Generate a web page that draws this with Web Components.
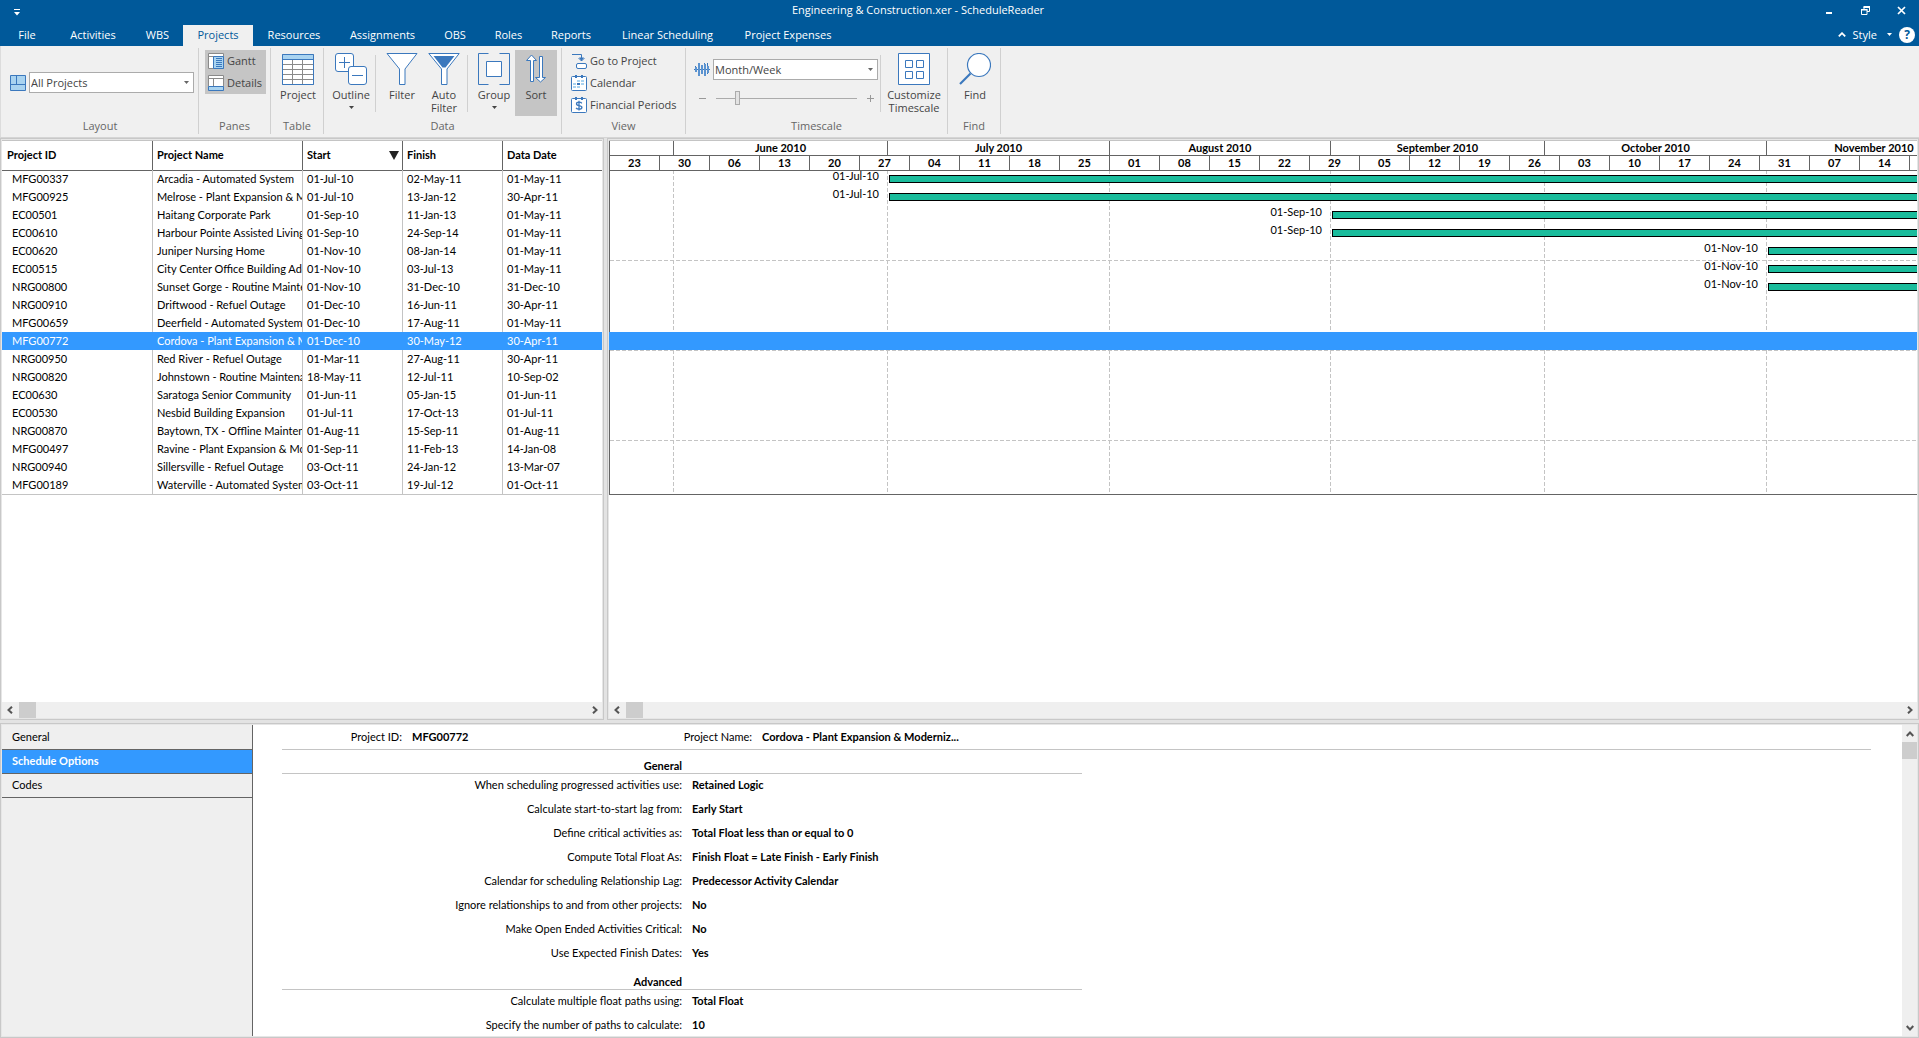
<!DOCTYPE html>
<html lang="en">
<head>
<meta charset="utf-8">
<title>Engineering &amp; Construction.xer - ScheduleReader</title>
<style>
  html, body { height: 100%; margin: 0; }
  body {
    --ui: "Open Sans", "Noto Sans", sans-serif;
    --data: Lato, "Open Sans", sans-serif;
    --blue: #00599a;
    --face: #f0f0f0;
    --rule: #c4c4c4;
    --dark: #646464;
    --select: #3399ff;
    font: 11px/14px var(--ui);
    color: #444;
    background: #e3e3e3;
    overflow: hidden;
  }
</style>
</head>
<body>
<schedule-app></schedule-app>

<script>
const define = (name, css, html, setup) => {
  const t = document.createElement('template');
  t.innerHTML = `<style>
    *, *::before, *::after { box-sizing: border-box; }
    button { font: inherit; color: inherit; background: none; border: 0; padding: 0; margin: 0; cursor: default; }
    svg { display: block; flex: none; }
    ${css}</style>${html}`;
  customElements.define(name, class extends HTMLElement {
    constructor() {
      super();
      this.attachShadow({ mode: 'open' }).append(t.content.cloneNode(true));
    }
    connectedCallback() { if (setup) setup(this, this.shadowRoot); }
  });
};

const S = 'fill="#fff" stroke="#3b78bd"';
const ICONS = {
  layout: [16, 16, `<g fill="#a9d3f0" stroke="#3b78bd"><path d="M.5.5h15v15H.5z"/><path d="M.5 9.500h15M6.500.5v9" fill="none"/></g>`],
  gantt: [16, 16, `<path d="M.5.5h15v15H.5z" fill="#fff" stroke="#8a8a8a"/><path d="M1 3.500h14M5.500 3v12" stroke="#8a8a8a"/><path d="M5.500 3.500h10v12h-10z" fill="#a9d3f0" stroke="#3b78bd"/><path d="M8 5.500h6M8 7.500h6M8 9.500h6M8 11.500h6M8 13.500h6" stroke="#3b78bd"/>`],
  details: [16, 16, `<path d="M.5.5h15v11H.5z" fill="#fff" stroke="#8a8a8a"/><path d="M1 3.500h14M5.500 3v8" stroke="#8a8a8a"/><path d="M.5 11.500h15v4H.5z" fill="#a9d3f0" stroke="#3b78bd"/>`],
  table: [32, 32, `<path d="M.5 1.500h31v30H.5z" fill="#fff" stroke="#8a8a8a"/><path d="M1 6.500h30M1 11.500h30M1 16.500h30M1 21.500h30M1 26.500h30M10.500 6v25M20.500 6v25" stroke="#8a8a8a"/><path d="M.5 1.500h31v5H.5z" fill="#a9d3f0"/><path d="M.5 1.500h31v30H.5zM.5 6.500h31" fill="none" stroke="#3b78bd"/>`],
  outline: [32, 32, `<g ${S}><rect x=".5" y=".5" width="18" height="18" rx="2.500"/><path d="M4 9.500h11M9.500 4v11"/><rect x="13.500" y="13.500" width="18" height="18" rx="2.500"/><path d="M17 22.500h11"/></g>`],
  filter: [32, 32, `<path d="M1 .5h30L19 16v15.500h-5.500V16z" ${S}/>`],
  autofilter: [32, 32, `<path d="M.8.5h30.400L19 16v15.500h-5.500V16z" ${S}/><path d="M5.500 3h21L17.500 14.500h-3z" fill="#3b78bd"/>`],
  group: [32, 32, `<path d="M10.500.5H.5v31h10M21.500.5h10v31h-10" fill="none" stroke="#3b78bd"/><path d="M8.500 8.500h15v15h-15z" ${S}/>`],
  sort: [32, 32, `<g ${S} transform="translate(6 1)"><path d="M4.500 27.500V6.500H.5l5-5.500 5 5.500h-3v21z"/><path d="M13.500 2.500v21h-4l5 4.500 5-4.500h-3v-21z"/></g>`],
  goto: [16, 16, `<path d="M1 1.500h9.500V8M7.500 5l3 3 3-3" fill="none" stroke="#3b78bd"/><path d="M8 4.500h5L10.500 8z" fill="#3b78bd"/><rect x="5.500" y="10.500" width="10" height="5" rx="1.500" ${S}/>`],
  calendar: [16, 16, `<rect x=".5" y="1.500" width="15" height="14" rx="1" ${S}/><path d="M4 0h2v3H4zM10 0h2v3h-2z" fill="#3b78bd"/><path d="M6 5h3v2H6zM10 5h3v2h-3zM2 8h3v2H2zM10 8h3v2h-3zM2 11h3v2H2zM6 11h3v2H6z" fill="#a9d3f0"/><path d="M6 8h3v2H6z" fill="#3b78bd"/>`],
  finance: [16, 16, `<rect x=".5" y="1.500" width="15" height="14" rx="1" ${S}/><path d="M4 0h2v3H4zM10 0h2v3h-2z" fill="#3b78bd"/><path d="M10.800 6.300C10.300 5.500 9.400 5.200 8.200 5.200 6.600 5.200 5.500 5.800 5.500 6.900 5.500 9.300 10.900 8 10.900 10.400 10.900 11.600 9.700 12.200 8 12.200 6.700 12.200 5.600 11.800 5.100 10.900M8 3.800v9.700" fill="none" stroke="#3b78bd" stroke-width="1.300"/>`],
  wave: [16, 16, `<path d="M0 7.500h16M1.500 4v6M4.500 1v13M7.500 3v9M10.500 1v13M13.500 1v11" stroke="#3b78bd" stroke-width="1"/><path d="M1 5h2v5H1zM4 1h2v13H4zM7 3h2v9H7zM10 2h2v12h-2zM13 4h2v7h-2z" fill="#5b93d0"/>`],
  tiles: [32, 32, `<path d="M.5.5h31v31H.5z" ${S}/><path d="M7.500 7.500h7v7h-7zM18.500 7.500h7v7h-7zM7.500 18.500h7v7h-7zM18.500 18.500h7v7h-7z" ${S}/>`],
  find: [32, 32, `<path d="M11.500 20.500L1 31" stroke="#3b78bd" stroke-width="2.200"/><circle cx="20" cy="12" r="11.500" ${S} stroke-width="1.200"/>`],
  down: [5, 3, `<path d="M0 0h5L2.500 3z" fill="currentColor"/>`],
  qat: [6, 7, `<path d="M0 0h6v1H0zM0 3h6L3 6.500z" fill="#fff"/>`],
  min: [6, 2, `<path d="M0 0h6v2H0z" fill="#fff"/>`],
  restore: [9, 9, `<path d="M3 3V1h5.500v4.500H6M.5 3.500h5.500v5H.5z" fill="none" stroke="#fff"/><path d="M2.500 0H9v2H2.500zM0 3h6.500v1.500H0z" fill="#fff"/>`],
  close: [9, 9, `<path d="M1 1l7 7M8 1L1 8" stroke="#fff" stroke-width="1.700"/>`],
  up: [8, 5, `<path d="M.8 4.300L4 1.200l3.200 3.100" fill="none" stroke="#fff" stroke-width="1.800"/>`],
  sorted: [10, 9, `<path d="M0 0h10L5 9z" fill="#222"/>`],
  chevL: [6, 8, `<path d="M5 .7L1.500 4 5 7.300" fill="none" stroke="#555" stroke-width="2"/>`],
  chevR: [6, 8, `<path d="M1 .7L4.500 4 1 7.300" fill="none" stroke="#555" stroke-width="2"/>`],
  chevU: [8, 6, `<path d="M.7 5L4 1.500 7.300 5" fill="none" stroke="#555" stroke-width="2"/>`],
  chevD: [8, 6, `<path d="M.7 1L4 4.500 7.300 1" fill="none" stroke="#555" stroke-width="2"/>`]
};
const icon = n => { const [w, h, p] = ICONS[n]; return `<svg width="${w}" height="${h}" viewBox="0 0 ${w} ${h}" aria-hidden="true">${p}</svg>`; };

/* Title bar */
define('title-bar', `
  :host { display: flex; align-items: center; height: 24px; flex: none; background: var(--blue); color: #fff; }
  .qat { width: 33px; height: 18px; padding-left: 14px; display: flex; align-items: center; }
  h1 { flex: 1; margin: 0; font: inherit; text-align: center; height: 22px; line-height: 18px; }
  .win { width: 36px; height: 21px; display: flex; align-items: center; justify-content: center; }
  .win.min { align-items: flex-end; padding-bottom: 7px; }
  nav { display: flex; align-items: flex-start; height: 24px; padding-left: 8px; }
`, `<button class="qat" aria-label="Customize quick access">${icon('qat')}</button>
  <h1>Engineering &amp; Construction.xer - ScheduleReader</h1>
  <nav><button class="win min" aria-label="Minimize">${icon('min')}</button><button class="win" aria-label="Restore">${icon('restore')}</button><button class="win" aria-label="Close">${icon('close')}</button></nav>`);

/* Ribbon tabs */
const TABS = [['File', 54], ['Activities', 78], ['WBS', 51], ['Projects', 70], ['Resources', 82], ['Assignments', 95], ['OBS', 50], ['Roles', 57], ['Reports', 68], ['Linear Scheduling', 125], ['Project Expenses', 116]];
define('ribbon-tabs', `
  :host { display: flex; height: 22px; flex: none; align-items: stretch; background: var(--blue); color: #fff; }
  .tabs { display: flex; flex: 1; }
  .tabs button { line-height: 19px; padding-bottom: 2px; white-space: nowrap; }
  .tabs .on { background: var(--face); color: var(--blue); margin-top: 1px; line-height: 18px; }
  .right { display: flex; align-items: center; padding: 0 4px 1px 0; gap: 7px; }
  .right button { display: flex; align-items: center; }
  .style { gap: 10px; }
  .help { width: 16px; height: 16px; border-radius: 50%; background: #fff; color: var(--blue); justify-content: center; font-weight: 700; font-size: 12px; }
`, `<div class="tabs">${TABS.map(([t, w]) => `<button style="width:${w}px"${t === 'Projects' ? ' class="on"' : ''}>${t}</button>`).join('')}</div>
  <div class="right"><button aria-label="Collapse ribbon">${icon('up')}</button><button class="style">Style ${icon('down')}</button><button class="help">?</button></div>`);

/* Ribbon pieces */
define('ribbon-group', `
  :host { display: flex; flex-direction: column; flex: none; height: 86px; border-right: 1px solid #d0d0d0; }
  .body { display: flex; flex: 1; align-items: flex-start; padding-top: 2px; }
  .name { height: 16px; text-align: center; color: #666; line-height: 16px; }
`, `<div class="body"><slot></slot></div><div class="name"></div>`,
  (el, root) => { root.querySelector('.name').textContent = el.getAttribute('label'); });

define('big-button', `
  :host { display: block; flex: none; }
  button { display: flex; flex-direction: column; align-items: center; width: 100%; height: 66px; padding-top: 3px; line-height: 13px; text-align: center; }
  :host([pressed]) button { background: #c5c5c5; }
  .text { margin-top: 3px; }
  .arrow { margin-top: 5px; }
`, `<button><span class="icon"></span><span class="text"><slot></slot></span></button>`,
  (el, root) => {
    root.querySelector('.icon').innerHTML = icon(el.getAttribute('icon'));
    if (el.hasAttribute('menu')) root.querySelector('button').insertAdjacentHTML('beforeend', `<span class="arrow">${icon('down')}</span>`);
  });

define('small-button', `
  :host { display: block; }
  button { display: flex; align-items: center; gap: 3px; height: 22px; width: 100%; padding: 0 3px; white-space: nowrap; }
  :host([pressed]) button { background: #c5c5c5; }
`, `<button><span class="icon"></span><slot></slot></button>`,
  (el, root) => { root.querySelector('.icon').innerHTML = icon(el.getAttribute('icon')); });

define('combo-box', `
  :host { display: flex; width: 165px; height: 21px; }
  label { display: grid; flex: 1; align-items: center; color: #666; }
  select { grid-area: 1/1; appearance: none; width: 100%; height: 21px; margin: 0; border: 1px solid #ababab; border-radius: 0; background: #fff; font: inherit; color: #444; padding: 0 1px; outline: 0; }
  svg { grid-area: 1/1; justify-self: end; margin-right: 5px; pointer-events: none; }
`, `<label><select></select>${icon('down')}</label>`,
  (el, root) => {
    const s = root.querySelector('select');
    s.setAttribute('aria-label', el.getAttribute('name'));
    s.add(new Option(el.getAttribute('value')));
  });

define('zoom-slider', `
  :host { display: flex; align-items: center; justify-content: space-between; height: 14px; width: 176px; }
  button { width: 8px; height: 14px; display: flex; align-items: center; justify-content: center; }
  input { appearance: none; width: 141px; height: 14px; margin: 0; background: linear-gradient(#ababab, #ababab) center / 100% 1px no-repeat; }
  input::-webkit-slider-thumb { appearance: none; width: 5px; height: 14px; border: 1px solid #ababab; background: #e3e3e3; }
`, `<button aria-label="Zoom out"><svg width="7" height="7"><path d="M0 3.500h7" stroke="#999"/></svg></button>
  <input type="range" min="0" max="100" value="14" aria-label="Zoom">
  <button aria-label="Zoom in"><svg width="7" height="7"><path d="M0 3.500h7M3.500 0v7" stroke="#999"/></svg></button>`);

define('app-ribbon', `
  :host { display: flex; flex: none; height: 92px; padding: 2px 0 3px 1px; background: var(--face); border-bottom: 1px solid #d5d5d5; border-left: 1px solid #dcdcdc; }
  ribbon-group { padding: 0; }
  .row { display: flex; align-items: center; gap: 3px; }
  .col { display: flex; flex-direction: column; }
  .sep { width: 1px; height: 57px; margin-top: 5px; background: #d0d0d0; }
`, `
  <ribbon-group label="Layout" style="width:197px"><div class="row" style="padding:22px 0 0 8px">${icon('layout')}<combo-box name="Layout" value="All Projects"></combo-box></div></ribbon-group>
  <ribbon-group label="Panes" style="width:72px"><div class="col" style="padding-left:6px;width:67px"><small-button icon="gantt" pressed>Gantt</small-button><small-button icon="details" pressed>Details</small-button></div></ribbon-group>
  <ribbon-group label="Table" style="width:53px"><big-button icon="table" style="width:54px">Project</big-button></ribbon-group>
  <ribbon-group label="Data" style="width:238px">
    <big-button icon="outline" menu style="width:54px;margin-right:-3px">Outline</big-button><span class="sep"></span>
    <big-button icon="filter" style="width:52px">Filter</big-button><big-button icon="autofilter" style="width:32px">Auto<br>Filter</big-button><span class="sep" style="margin-left:7px"></span>
    <big-button icon="group" menu style="width:52px;margin-right:-5px">Group</big-button><big-button icon="sort" pressed style="width:42px">Sort</big-button></ribbon-group>
  <ribbon-group label="View" style="width:124px"><div class="col" style="padding-left:6px"><small-button icon="goto">Go to Project</small-button><small-button icon="calendar">Calendar</small-button><small-button icon="finance">Financial Periods</small-button></div></ribbon-group>
  <ribbon-group label="Timescale" style="width:262px">
    <div class="col" style="width:194px;gap:11px;padding:9px 0 0 8px"><div class="row">${icon('wave')}<combo-box name="Timescale" value="Month/Week"></combo-box></div><zoom-slider style="margin-left:4px"></zoom-slider></div>
    <span class="sep"></span><big-button icon="tiles" style="width:66px">Customize<br>Timescale</big-button></ribbon-group>
  <ribbon-group label="Find" style="width:53px"><big-button icon="find" style="width:54px">Find</big-button></ribbon-group>`);

/* Framed pane and scroll bar */
define('app-pane', `
  :host { display: flex; border: 1px solid #c8c8c8; min-width: 0; min-height: 0; }
  div { flex: 1; display: flex; flex-direction: column; min-width: 0; min-height: 0; border: 1px solid #e6e6e6; background: #fff; overflow: hidden; }
  :host([row]) div { flex-direction: row; }
`, `<div><slot></slot></div>`);

define('scroll-bar', `
  :host { display: flex; align-items: stretch; flex: none; height: 16px; background: #efefef; }
  :host([vertical]) { flex-direction: column; width: 15px; height: auto; }
  button { flex: 0 0 17px; display: flex; align-items: center; justify-content: center; }
  .track { flex: 1; display: flex; flex-direction: inherit; }
  .thumb { flex: 0 0 17px; background: #cdcdcd; }
  :host(:not([vertical])) .first { padding-right: 2px; }
  :host(:not([vertical])) .last { padding-left: 2px; }
`, `<button class="first" aria-label="Scroll back"></button><div class="track"><div class="thumb"></div></div><button class="last" aria-label="Scroll forward"></button>`,
  (el, root) => {
    const v = el.hasAttribute('vertical');
    root.querySelector('.first').innerHTML = icon(v ? 'chevU' : 'chevL');
    root.querySelector('.last').innerHTML = icon(v ? 'chevD' : 'chevR');
  });

/* Project data */
const P = [
  ['MFG00337', 'Arcadia - Automated System', '01-Jul-10', '02-May-11', '01-May-11'],
  ['MFG00925', 'Melrose - Plant Expansion & Modernization', '01-Jul-10', '13-Jan-12', '30-Apr-11'],
  ['EC00501', 'Haitang Corporate Park', '01-Sep-10', '11-Jan-13', '01-May-11'],
  ['EC00610', 'Harbour Pointe Assisted Living Center', '01-Sep-10', '24-Sep-14', '01-May-11'],
  ['EC00620', 'Juniper Nursing Home', '01-Nov-10', '08-Jan-14', '01-May-11'],
  ['EC00515', 'City Center Office Building Addition', '01-Nov-10', '03-Jul-13', '01-May-11'],
  ['NRG00800', 'Sunset Gorge - Routine Maintenance', '01-Nov-10', '31-Dec-10', '31-Dec-10'],
  ['NRG00910', 'Driftwood - Refuel Outage', '01-Dec-10', '16-Jun-11', '30-Apr-11'],
  ['MFG00659', 'Deerfield - Automated System', '01-Dec-10', '17-Aug-11', '01-May-11'],
  ['MFG00772', 'Cordova - Plant Expansion & Modernization', '01-Dec-10', '30-May-12', '30-Apr-11'],
  ['NRG00950', 'Red River - Refuel Outage', '01-Mar-11', '27-Aug-11', '30-Apr-11'],
  ['NRG00820', 'Johnstown - Routine Maintenance', '18-May-11', '12-Jul-11', '10-Sep-02'],
  ['EC00630', 'Saratoga Senior Community', '01-Jun-11', '05-Jan-15', '01-Jun-11'],
  ['EC00530', 'Nesbid Building Expansion', '01-Jul-11', '17-Oct-13', '01-Jul-11'],
  ['NRG00870', 'Baytown, TX - Offline Maintenance', '01-Aug-11', '15-Sep-11', '01-Aug-11'],
  ['MFG00497', 'Ravine - Plant Expansion & Modernization', '01-Sep-11', '11-Feb-13', '14-Jan-08'],
  ['NRG00940', 'Sillersville - Refuel Outage', '03-Oct-11', '24-Jan-12', '13-Mar-07'],
  ['MFG00189', 'Waterville - Automated System', '03-Oct-11', '19-Jul-12', '01-Oct-11']
];
const SELECTED = 'MFG00772';
const esc = s => s.replace(/&/g, '&amp;');

define('project-grid', `
  :host { display: block; flex: 1; min-height: 0; font: 11px/18px var(--data); color: #000; border-top: 1px solid var(--rule); }
  table { width: 100%; border-collapse: separate; border-spacing: 0; table-layout: fixed; border-bottom: 1px solid var(--rule); }
  th, td { padding: 0 0 0 4px; text-align: left; white-space: nowrap; overflow: hidden; border-right: 1px solid var(--rule); }
  th { height: 29px; padding-bottom: 1px; border-color: var(--dark); font-weight: 700; }
  td { height: 18px; }
  th:first-child { padding-left: 5px; }
  td:first-child { padding-left: 10px; }
  th:last-child, td:last-child { border-right: 0; }
  tbody tr:first-child td { box-shadow: inset 0 1px var(--dark); }
  tr.sel td { background: var(--select); color: #fff; border-color: var(--select); }
  .sorted { display: flex; align-items: center; justify-content: space-between; padding-right: 3px; }
`, `<table><colgroup><col style="width:151px"><col style="width:150px"><col style="width:100px"><col style="width:100px"><col></colgroup>
  <thead><tr><th>Project ID</th><th>Project Name</th><th aria-sort="ascending"><span class="sorted">Start ${icon('sorted')}</span></th><th>Finish</th><th>Data Date</th></tr></thead>
  <tbody>${P.map(r => `<tr${r[0] === SELECTED ? ' class="sel"' : ''}>${r.map(c => `<td>${esc(c)}</td>`).join('')}</tr>`).join('')}</tbody></table>`);

/* Gantt chart: distances are measured from the left edge of the time axis */
const MONTHS = [['', 64], ['June 2010', 214], ['July 2010', 222], ['August 2010', 221], ['September 2010', 214], ['October 2010', 222], ['November 2010', 215]];
const WEEKS = '23 30 06 13 20 27 04 11 18 25 01 08 15 22 29 05 12 19 26 03 10 17 24 31 07 14 21'.split(' ');
const STARTS = { '01-Jul-10': 279, '01-Sep-10': 722, '01-Nov-10': 1158 };
const edges = MONTHS.slice(0, -1).reduce((a, m) => [...a, (a.at(-1) || 0) + m[1]], []);
define('gantt-chart', `
  :host { display: block; flex: 1; min-height: 0; overflow: hidden; font: 11px/18px var(--data); color: #000; border-top: 1px solid var(--rule); }
  .frame { border-left: 1px solid var(--dark); border-bottom: 1px solid var(--dark); }
  .scale { display: flex; overflow: hidden; font-weight: 700; text-align: center; line-height: 14px; }
  .scale span { flex: none; height: 14px; border-right: 1px solid var(--dark); }
  .months { height: 15px; border-bottom: 1px solid var(--dark); }
  .weeks { height: 14px; }
  .weeks span { width: 50px; }
  .rows { background: ${edges.map(x => `linear-gradient(#c4c4c4 4px, transparent 4px) ${x - 1}px 0 / 1px 6px repeat-y`).join(',')}; }
  .row { display: flex; height: 18px; }
  .row:nth-child(5n+6) { background: linear-gradient(90deg, #c4c4c4 4px, transparent 4px) 0 0 / 6px 1px repeat-x; }
  .row:first-child { box-shadow: inset 0 1px var(--dark); }
  .row.sel { background: var(--select); margin-left: -1px; }
  .date { flex: none; padding-right: 10px; text-align: right; line-height: 12px; }
  .bar { flex: 1; height: 8px; margin-top: 5px; background: #1abc9c; border: 1px solid #000; border-right: 0; }
`, `<div class="frame"><div class="scale months">${MONTHS.map(([m, w]) => `<span style="width:${w}px">${m}</span>`).join('')}</div>
  <div class="scale weeks">${WEEKS.map(w => `<span>${w}</span>`).join('')}</div>
  <div class="rows">${P.map(r => `<div class="row${r[0] === SELECTED ? ' sel' : ''}">${STARTS[r[2]] ? `<span class="date" style="width:${STARTS[r[2]]}px">${r[2]}</span><span class="bar"></span>` : ''}</div>`).join('')}</div></div>`);

/* Details */
define('detail-nav', `
  :host { display: flex; flex-direction: column; flex: 0 0 251px; padding-top: 1px; background: #efefef; border-right: 1px solid var(--dark); font: 11px/22px var(--data); color: #000; }
  button { height: 24px; padding: 0 0 1px 10px; text-align: left; border-bottom: 1px solid var(--dark); }
  .on { background: var(--select); color: #fff; font-weight: 700; }
`, `<button>General</button><button class="on">Schedule Options</button><button>Codes</button>`);

const OPTIONS = {
  General: [['When scheduling progressed activities use:', 'Retained Logic'], ['Calculate start-to-start lag from:', 'Early Start'], ['Define critical activities as:', 'Total Float less than or equal to 0'], ['Compute Total Float As:', 'Finish Float = Late Finish - Early Finish'], ['Calendar for scheduling Relationship Lag:', 'Predecessor Activity Calendar'], ['Ignore relationships to and from other projects:', 'No'], ['Make Open Ended Activities Critical:', 'No'], ['Use Expected Finish Dates:', 'Yes']],
  Advanced: [['Calculate multiple float paths using:', 'Total Float'], ['Specify the number of paths to calculate:', '10']]
};
define('detail-form', `
  :host { display: block; flex: 1; min-width: 0; padding: 1px 31px 0 29px; overflow: hidden; font: 11px/22px var(--data); color: #000; background: #fff; }
  .head { display: flex; height: 24px; border-bottom: 1px solid var(--rule); }
  .pair { display: flex; gap: 10px; height: 24px; white-space: nowrap; }
  .label { text-align: right; }
  b { font-weight: 700; }
  .id .label { width: 120px; }
  .id { width: 350px; }
  .name .label { width: 120px; }
  section { width: 800px; }
  h2 { margin: 0; height: 24px; padding-right: 400px; font: 700 11px/32px var(--data); text-align: right; border-bottom: 1px solid var(--rule); }
  section .label { width: 400px; }
`, `<div class="head"><div class="pair id"><span class="label">Project ID:</span><b>MFG00772</b></div><div class="pair name"><span class="label">Project Name:</span><b>Cordova - Plant Expansion &amp; Moderniz...</b></div></div>
  ${Object.entries(OPTIONS).map(([h, rows]) => `<section><h2>${h}</h2>${rows.map(([l, v]) => `<div class="pair"><span class="label">${l}</span><b>${v}</b></div>`).join('')}</section>`).join('')}`);

define('schedule-app', `
  :host { display: flex; flex-direction: column; height: 100vh; }
  main { flex: 1; display: flex; flex-direction: column; gap: 3px; min-height: 0; }
  .top { flex: 1; display: flex; gap: 3px; min-height: 0; }
  .left { flex: 0 0 604px; }
  .right { flex: 1; }
  .details { flex: 0 0 315px; }
`, `<title-bar></title-bar><ribbon-tabs></ribbon-tabs><app-ribbon></app-ribbon>
  <main>
    <div class="top">
      <app-pane class="left"><project-grid></project-grid><scroll-bar></scroll-bar></app-pane>
      <app-pane class="right"><gantt-chart></gantt-chart><scroll-bar></scroll-bar></app-pane>
    </div>
    <app-pane class="details" row><detail-nav></detail-nav><detail-form></detail-form><scroll-bar vertical></scroll-bar></app-pane>
  </main>`);
</script>
</body>
</html>
